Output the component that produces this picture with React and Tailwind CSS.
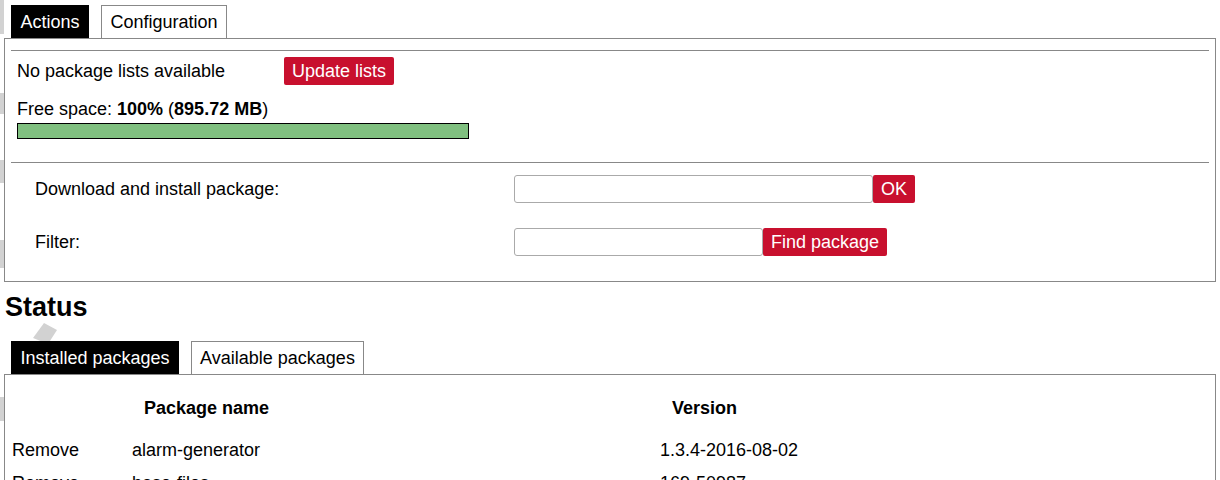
import React from 'react';

// Faint background artwork bleeding in at the left edge
function Backdrop() {
  return (
    <svg className="absolute left-0 top-0 pointer-events-none" width="80" height="480" aria-hidden="true">
      <g fill="#d2d2d2">
        <rect x="0" y="0" width="4" height="34" />
        <rect x="0" y="93" width="4" height="21" />
        <rect x="0" y="160" width="4" height="23" />
        <rect x="0" y="240" width="4" height="28" />
        <polygon points="44,323 57,330 48,344 33,338" />
        <rect x="0" y="397" width="4" height="24" />
      </g>
    </svg>
  );
}

function Tabs({ items, active }) {
  return (
    <div className="flex gap-[12px] pl-[7px] h-[33px] items-end">
      {items.map(([label, w]) => (
        <div
          key={label}
          className={
            label === active
              ? 'h-[33px] flex items-center justify-center bg-black text-white border border-black border-b-0'
              : 'h-[33px] flex items-center justify-center bg-white text-black border border-[#888] border-b-0'
          }
          style={{ width: w }}
        >
          {label}
        </div>
      ))}
    </div>
  );
}

function RedButton({ children, className = '' }) {
  return (
    <button className={`h-[28px] px-0 bg-[#c8102e] text-white rounded-[2px] leading-none whitespace-nowrap ${className}`}>
      {children}
    </button>
  );
}

export default function App() {
  const rows = [
    ['alarm-generator', '1.3.4-2016-08-02'],
    ['base-files', '169-50987'],
  ];

  return (
    <div
      className="relative w-[1220px] h-[480px] overflow-hidden bg-white text-black text-[18px]"
      style={{ fontFamily: '"Liberation Sans", Arial, sans-serif' }}
    >
      <Backdrop />
      <div className="relative px-[4px] pt-[5px]">
        <Tabs items={[['Actions', 78], ['Configuration', 126]]} active="Actions" />

        <div className="border border-[#888] px-[6px] pt-[11px] pb-[25px]">
          <div className="border-t border-[#888]" />
          <div className="mt-[6px] h-[28px] flex items-center pl-[6px]">
            <span className="w-[267px]">No package lists available</span>
            <RedButton className="w-[110px]">Update lists</RedButton>
          </div>
          <div className="mt-[13px] h-[18px] leading-[18px] pl-[6px] translate-y-[2px]">
            Free space: <b>100%</b> (<b>895.72 MB</b>)
          </div>
          <div className="mt-[7px] ml-[6px] w-[452px] h-[16px] border border-black bg-[#80c080]" />
          <div className="mt-[23px] border-t border-[#888]" />

          <div className="mt-[12px] h-[28px] flex items-center">
            <span className="w-[503px] pl-[24px]">Download and install package:</span>
            <input className="w-[359px] h-[28px] border border-[#aaa] rounded-[3px] bg-white" />
            <RedButton className="w-[42px]">OK</RedButton>
          </div>
          <div className="mt-[25px] h-[28px] flex items-center">
            <span className="w-[503px] pl-[24px]">Filter:</span>
            <input className="w-[249px] h-[28px] border border-[#aaa] rounded-[3px] bg-white" />
            <RedButton className="w-[124px]">Find package</RedButton>
          </div>
        </div>

        <h2 className="mt-[9px] h-[32px] leading-[32px] text-[27px] font-bold pl-[1px]">Status</h2>

        <div className="mt-[18px]">
          <Tabs items={[['Installed packages', 168], ['Available packages', 173]]} active="Installed packages" />
        </div>

        <div className="border border-[#888] pt-[19px] h-[200px]">
          <div className="grid grid-cols-[127px_528px_1fr] h-[28px] items-center font-bold">
            <span />
            <span className="pl-[12px]">Package name</span>
            <span className="pl-[12px]">Version</span>
          </div>
          <div className="mt-[12px]">
            {rows.map(([name, ver]) => (
              <div key={name} className="grid grid-cols-[127px_528px_1fr] h-[33px] items-center">
                <span className="pl-[7px]">Remove</span>
                <span>{name}</span>
                <span>{ver}</span>
              </div>
            ))}
          </div>
        </div>
      </div>
    </div>
  );
}
